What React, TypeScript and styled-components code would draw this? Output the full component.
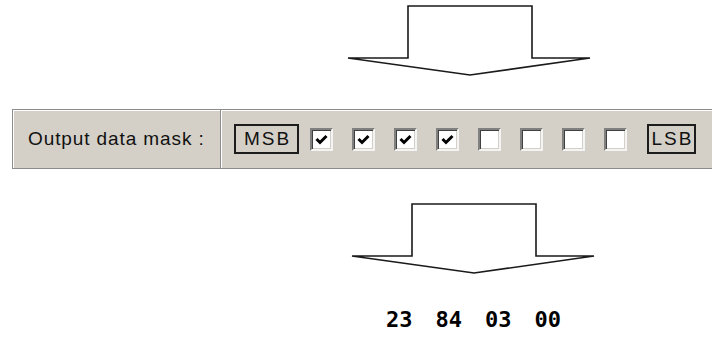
import React from "react";
import styled, { createGlobalStyle } from "styled-components";

const GlobalStyle = createGlobalStyle`
  html, body {
    margin: 0;
    padding: 0;
    background: #ffffff;
  }
  body {
    font-family: "Liberation Sans", "DejaVu Sans", sans-serif;
  }
`;

const Page = styled.div`
  width: 712px;
  height: 340px;
  overflow: hidden;
  display: flex;
  flex-direction: column;
`;

const ArrowRow = styled.div<{ $left: number; $top: number }>`
  display: flex;
  margin: ${p => p.$top}px 0 0 ${p => p.$left}px;
  height: 74px;
`;

const MaskPanel = styled.div`
  display: flex;
  align-items: stretch;
  margin: 31px 0 0 12px;
  height: 58px;
  background: #d4d0c8;
  border-top: 1px solid #8c8c8c;
  border-left: 1px solid #8c8c8c;
  border-bottom: 1px solid #8c8c8c;
  box-shadow: inset 1px 1px 0 #ffffff;
`;

const LabelCell = styled.div`
  width: 208px;
  display: flex;
  align-items: center;
  padding-left: 15px;
  box-sizing: border-box;
  border-right: 1px solid #8c8c8c;
  box-shadow: 1px 0 0 #ffffff;
  font-size: 19px;
  letter-spacing: 0.9px;
  color: #111;
`;

const BitsCell = styled.div`
  flex: 1;
  display: flex;
  align-items: center;
  padding-left: 13px;
`;

const EndBox = styled.div<{ $width: number; $gapAfter: number }>`
  width: ${p => p.$width}px;
  height: 30px;
  box-sizing: border-box;
  border: 2px solid #1c1c1c;
  display: flex;
  align-items: center;
  justify-content: center;
  padding-left: 2px;
  font-size: 19px;
  letter-spacing: 2px;
  color: #111;
  margin-right: ${p => p.$gapAfter}px;
`;

const CheckBox = styled.div`
  width: 23px;
  height: 23px;
  box-sizing: border-box;
  background: #ffffff;
  border-style: solid;
  border-width: 2px;
  border-color: #808080 #f4f4f4 #f4f4f4 #808080;
  box-shadow: inset 1px 1px 0 #404040, inset -1px -1px 0 #d4d0c8;
  display: flex;
  align-items: center;
  justify-content: center;
  margin-right: 19px;
  &:nth-of-type(9) {
    margin-right: 20px;
  }
`;

const ByteRow = styled.div`
  display: flex;
  gap: 23px;
  margin: 32px 0 0 386px;
  font-family: "DejaVu Sans Mono", "Liberation Mono", monospace;
  font-weight: bold;
  font-size: 22px;
  line-height: 24px;
  color: #000;
`;

const Arrow = () => (
  <svg width="246" height="74" viewBox="0 0 246 74">
    <path
      d="M2 54 H62 V2 H186 V54 H244 L124 71 Z"
      fill="#ffffff"
      stroke="#1a1a1a"
      strokeWidth="1.6"
      strokeLinejoin="miter"
    />
  </svg>
);

const Check = () => (
  <svg width="13" height="11" viewBox="0 0 13 11">
    <polyline points="1.5,5 5,8.5 11.5,2" fill="none" stroke="#000" strokeWidth="3" />
  </svg>
);

const mask = [true, true, true, true, false, false, false, false];
const bytes = ["23", "84", "03", "00"];

export default function App() {
  return (
    <Page>
      <GlobalStyle />
      <ArrowRow $left={346} $top={4}>
        <Arrow />
      </ArrowRow>
      <MaskPanel>
        <LabelCell>Output data mask :</LabelCell>
        <BitsCell>
          <EndBox $width={65} $gapAfter={11}>MSB</EndBox>
          {mask.map((on, i) => (
            <CheckBox key={i}>{on && <Check />}</CheckBox>
          ))}
          <EndBox $width={49} $gapAfter={0}>LSB</EndBox>
        </BitsCell>
      </MaskPanel>
      <ArrowRow $left={350} $top={33}>
        <Arrow />
      </ArrowRow>
      <ByteRow>
        {bytes.map(b => (
          <span key={b}>{b}</span>
        ))}
      </ByteRow>
    </Page>
  );
}
